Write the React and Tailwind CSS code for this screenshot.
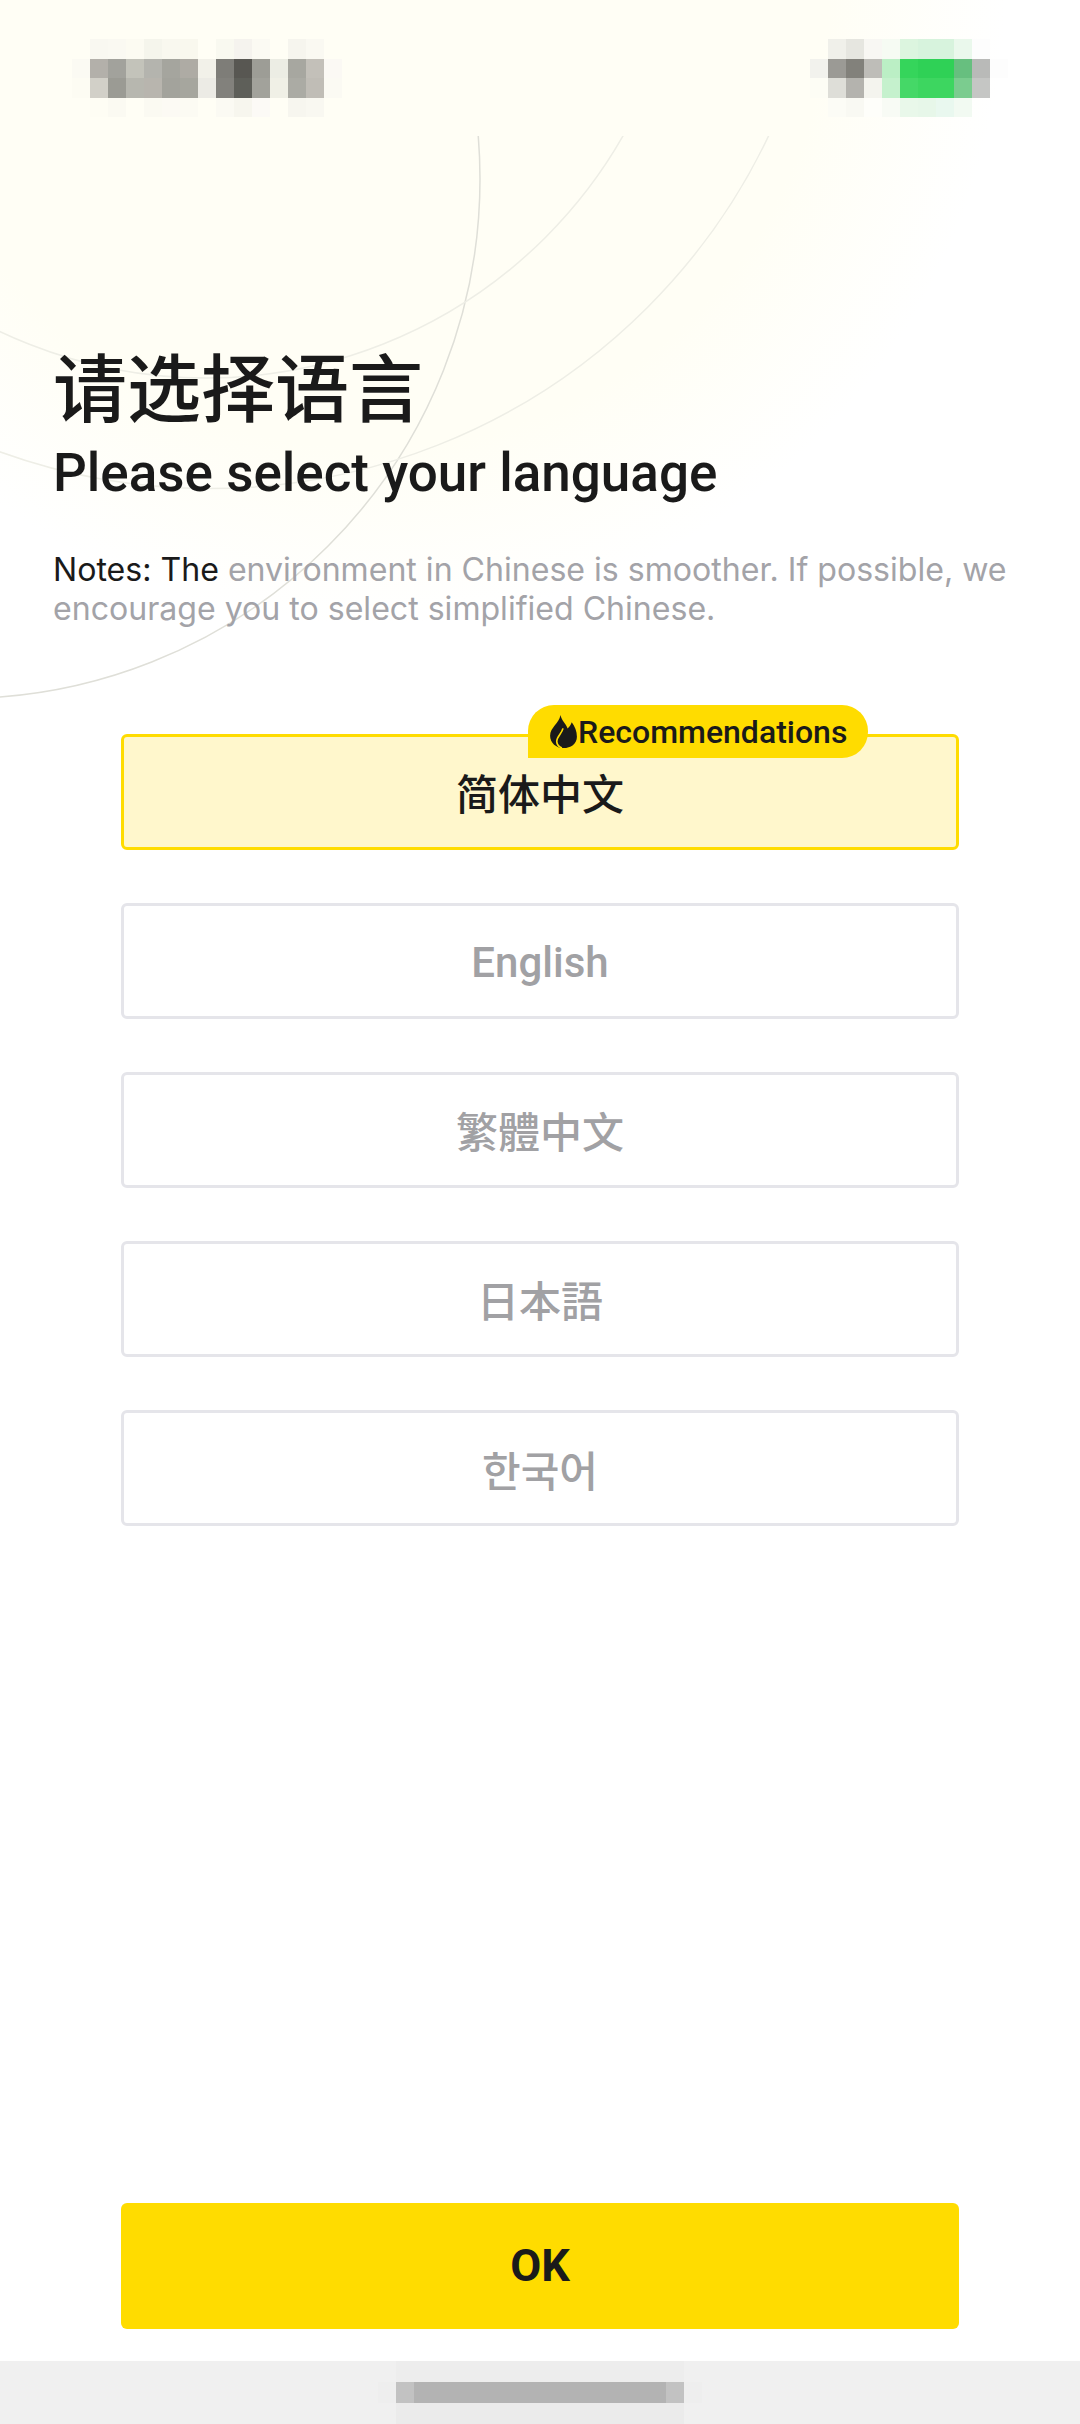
import React from 'react';

const CELL_W = 18;

// blurred status bar + nav handle are mosaics in the picture, kept as cell rows
const statusLeft = [
    [null, '#f9f8f1', '#faf9f2', '#fcfbf2', '#f5f5ec', '#f9f8ef', '#f9f8ee', null, '#f9f9f0', '#f5f3ee', '#fbfaf3', null, '#f6f5ee', '#faf9f2', null],
    ['#fbfaf3', '#b3b0aa', '#a2a29c', '#c3c3ba', '#b4b4ae', '#a5a59e', '#aeaba4', '#f2f1e9', '#7e7d78', '#585752', '#9d9d96', '#ecede4', '#a7a7a0', '#c3c0b9', '#fbf9f4'],
    ['#fdfcf3', '#d2d0c8', '#9b9b94', '#b7b7af', '#b8b5ae', '#a3a39c', '#a6a69e', '#ecebe5', '#82817c', '#5e5f59', '#a2a29b', '#f0f0e6', '#ababa4', '#c0bdb6', '#fbfaf3'],
    [null, '#fefdf4', '#fbfaf2', null, '#fbfaf2', '#fcfaf4', '#fcfbf3', null, '#fbfaf3', '#f7f6ee', '#fcfaf6', null, '#f7f6ef', '#f9f8f1', null],
];

const statusRight = [
    [null, null, '#f0f0ea', '#e6e6e0', '#f8f7f3', '#f6fbf3', '#dcf5df', '#d7f3dd', '#d7f3dd', '#eaf8ec', '#fdfdfd', null],
    [null, '#f2f2ed', '#9b9a95', '#82817b', '#bebdb8', '#bbefc5', '#35d55b', '#2fd156', '#2fd156', '#67bf7f', '#b9bab8', '#fdfdfd'],
    [null, '#fdfdf5', '#deded8', '#b4b3ae', '#f4f4ee', '#c5f1cd', '#45d867', '#3dd660', '#3dd660', '#7bcc8f', '#c5c6c4', null],
    [null, null, '#fcfcf6', '#f9f9f3', '#fefefa', '#f8fbf5', '#e9f8ea', '#e7f7e9', '#e9f8ef', '#f2faf2', null, null],
];

const Mosaic = ({ rows }) => {
    const heights = [20, 19, 20, 19];
    const tops = [0, 20, 39, 59];
    return (
        <svg width={rows[0].length * CELL_W} height={78} shapeRendering="crispEdges">
            {rows.map((row, r) =>
                row.map((c, i) =>
                    c ? <rect key={`${r}-${i}`} x={i * CELL_W} y={tops[r]} width={CELL_W} height={heights[r]} fill={c} /> : null
                )
            )}
        </svg>
    );
};

const Backdrop = () => (
    <svg className="absolute left-0 top-0" width="1080" height="760" fill="none">
        <defs>
            <radialGradient id="glow" gradientUnits="userSpaceOnUse" cx="370" cy="-10" r="635">
                <stop offset="0.72" stopColor="#fffef5" />
                <stop offset="1" stopColor="#ffffff" />
            </radialGradient>
            <clipPath id="below-status">
                <rect x="0" y="136" width="1080" height="624" />
            </clipPath>
        </defs>
        <rect width="1080" height="760" fill="url(#glow)" />
        <g clipPath="url(#below-status)" strokeWidth="1.5">
            <circle cx="-39.5" cy="179" r="519.5" stroke="#dfdfd8" />
            <circle cx="206" cy="-102" r="480" stroke="#eeeee6" />
            <circle cx="210" cy="-130" r="618.6" stroke="#eeeee6" />
        </g>
    </svg>
);

const Flame = () => (
    <svg className="shrink-0" width="27" height="33" viewBox="0 0 26 32">
        <path
            fill="#1a1a1a"
            d="M10 0C11 5 15 8 17 13C18.5 11.5 20 10 21 7C24 11 26 16 26 21C26 28 20 32 13 32C6 32 0 27 0 20C0 12 9 8 10 0Z"
        />
        <path fill="none" stroke="#ffdc00" strokeWidth="1.6" d="M12.5 13C11.5 18 6 21 6.5 26C6.8 29 9 31 11.5 32" />
    </svg>
);

const languages = [
    { label: 'English', font: "pt-[2px] font-['Roboto',sans-serif]" },
    { label: '繁體中文', font: "pb-[2px] font-['Noto_Sans_CJK_TC',sans-serif]" },
    { label: '日本語', font: "pb-[2px] font-['Noto_Sans_CJK_JP',sans-serif]" },
    { label: '한국어', font: "font-['Noto_Sans_CJK_KR',sans-serif]" },
];

export default function App() {
    return (
        <div className="relative flex h-[2424px] w-[1080px] flex-col overflow-hidden bg-white font-['Roboto','Noto_Sans_CJK_SC',sans-serif] text-[#1a1a1a]">
            <Backdrop />

            {/* Status bar */}
            <div className="relative flex h-[340px] items-start justify-between pl-[72px] pr-[72px] pt-[39px]">
                <Mosaic rows={statusLeft} />
                <Mosaic rows={statusRight} />
            </div>

            {/* Heading */}
            <div className="relative px-[53px]">
                <h1 className="font-['Noto_Sans_CJK_SC',sans-serif] text-[74px] leading-[88px] font-medium">请选择语言</h1>
                <h2 className="mt-[13px] text-[53px] leading-[64px] font-medium">Please select your language</h2>
                <p className="mt-[45px] font-['Inter',sans-serif] text-[32.1px] leading-[39px] text-[#a3a3a8]">
                    <span className="text-[#1a1a1a]">Notes: The</span> environment in Chinese is smoother. If possible, we encourage you to select simplified Chinese.
                </p>
            </div>

            {/* Language list */}
            <div className="relative mt-[106px] flex flex-col gap-[53px] px-[121px]">
                <button className="relative flex h-[116px] items-center justify-center rounded-[6px] border-[3px] border-[#ffdc00] bg-[#fff7cc] pb-[2px] font-['Noto_Sans_CJK_SC',sans-serif] text-[42px] font-medium">
                    简体中文
                    <span className="absolute left-[404px] top-[-32px] flex h-[53px] w-[340px] items-center gap-[1px] rounded-t-[26px] rounded-br-[26px] bg-[#ffdc00] pl-[22px] font-['Roboto',sans-serif] text-[32px] font-medium">
                        <Flame />
                        Recommendations
                    </span>
                </button>
                {languages.map((lang) => (
                    <button
                        key={lang.label}
                        className={`flex h-[116px] items-center justify-center rounded-[6px] border-[3px] border-[#e5e5ea] bg-white text-[42px] font-medium text-[#a1a1a4] ${lang.font}`}
                    >
                        {lang.label}
                    </button>
                ))}
            </div>

            {/* OK */}
            <div className="relative mt-auto px-[121px] pb-[32px]">
                <button className="flex h-[126px] w-full items-center justify-center rounded-[6px] bg-[#ffdc00] text-[45px] font-bold">OK</button>
            </div>

            {/* Nav bar */}
            <div className="relative flex h-[63px] flex-col items-center bg-[#f0f0f0]">
                <div className="h-[21px] w-[288px] bg-[#ededed]" />
                <div className="flex h-[21px]">
                    <div className="w-[18px] bg-[#eeeeee]" />
                    <div className="w-[18px] bg-[#c2c2c2]" />
                    <div className="w-[252px] bg-[#b3b3b3]" />
                    <div className="w-[18px] bg-[#c2c2c2]" />
                    <div className="w-[18px] bg-[#eeeeee]" />
                </div>
                <div className="h-[21px] w-[288px] bg-[#ebebeb]" />
            </div>
        </div>
    );
}
